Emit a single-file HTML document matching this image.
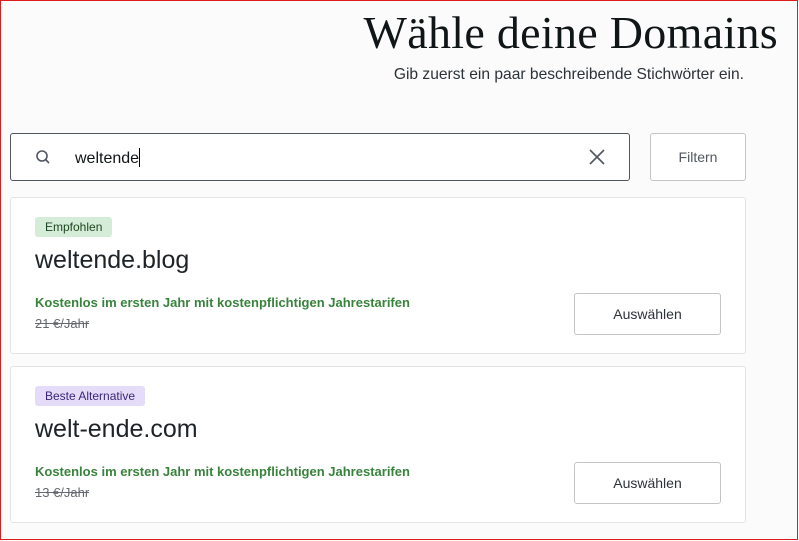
<!DOCTYPE html>
<html><head><meta charset="utf-8"><style>
*{box-sizing:border-box;margin:0;padding:0}
html,body{width:799px;height:541px;overflow:hidden;background:#fbfbfb}
body{font-family:"Liberation Sans",sans-serif;position:relative}
.frame{position:absolute;left:0;top:0;width:798px;height:540px;border:1px solid #e01b1b;z-index:5;pointer-events:none}
.title{position:absolute;right:21px;top:6px;font-family:"Liberation Serif",serif;font-size:46px;color:#101517;white-space:nowrap;letter-spacing:0.3px}
.sub{position:absolute;right:55px;top:66px;font-size:15.6px;color:#2c3338}
.search{position:absolute;left:10px;top:133px;width:620px;height:48px;border:1px solid #50575e;border-radius:3px;background:#fff}
.search .txt{position:absolute;left:64px;top:14px;font-size:16px;color:#101517}
.search .caret{display:inline-block;width:1px;height:19px;background:#000;vertical-align:-4px}
.filter{position:absolute;left:650px;top:133px;width:96px;height:48px;border:1px solid #c3c4c7;border-radius:3px;background:#fff;font-size:14px;color:#50575e;text-align:center;line-height:46px}
.card{position:absolute;left:10px;width:736px;height:157px;border:1px solid #e3e3e3;border-radius:3px;background:#fff}
.badge{position:absolute;left:24px;top:19px;height:20px;padding:0 10px;border-radius:3px;font-size:12px;line-height:20px}
.dom{position:absolute;left:24px;top:48px;font-size:25px;color:#1d2327}
.free{position:absolute;left:24px;top:97px;font-size:13px;font-weight:bold;color:#2e7d32;opacity:.95}
.price{position:absolute;left:24px;top:118px;font-size:13px;color:#646970;text-decoration:line-through}
.btn{position:absolute;left:563px;top:95px;width:147px;height:42px;border:1px solid #c3c4c7;border-radius:3px;text-align:center;line-height:40px;font-size:14px;color:#2c3338;background:#fff}
</style></head><body>
<div class="frame"></div>
<div class="title">Wähle deine Domains</div>
<div class="sub">Gib zuerst ein paar beschreibende Stichwörter ein.</div>
<div class="search">
<svg style="position:absolute;left:24px;top:15px" width="16" height="16" viewBox="0 0 16 16"><circle cx="7" cy="7" r="5" fill="none" stroke="#50575e" stroke-width="1.6"/><path d="M10.5 10.5L14 14" stroke="#50575e" stroke-width="1.6"/></svg>
<div class="txt">weltende<span class="caret"></span></div>
<svg style="position:absolute;left:578px;top:15px" width="16" height="16" viewBox="0 0 16 16"><path d="M1 1L15 15M15 1L1 15" stroke="#50575e" stroke-width="1.6"/></svg>
</div>
<div class="filter">Filtern</div>
<div class="card" style="top:197px">
<div class="badge" style="background:#d5ecd8;color:#1e4620">Empfohlen</div>
<div class="dom">weltende.blog</div>
<div class="free">Kostenlos im ersten Jahr mit kostenpflichtigen Jahrestarifen</div>
<div class="price">21 €/Jahr</div>
<div class="btn">Auswählen</div>
</div>
<div class="card" style="top:366px">
<div class="badge" style="background:#e5dcfa;color:#3c2579">Beste Alternative</div>
<div class="dom">welt-ende.com</div>
<div class="free">Kostenlos im ersten Jahr mit kostenpflichtigen Jahrestarifen</div>
<div class="price">13 €/Jahr</div>
<div class="btn">Auswählen</div>
</div>
</body></html>
